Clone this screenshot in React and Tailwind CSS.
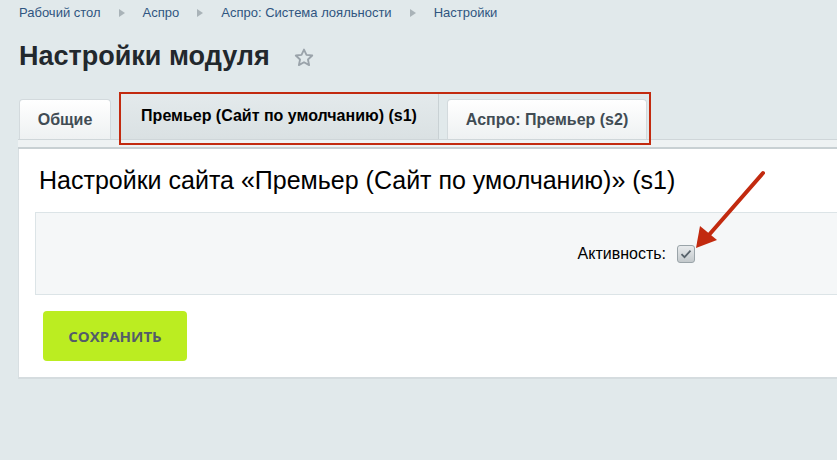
import React from 'react';

const crumbs = ['Рабочий стол', 'Аспро', 'Аспро: Система лояльности', 'Настройки'];

const Sep = () => (
  <svg width="6" height="8" viewBox="0 0 6 8" className='mx-[18px]'>
    <path d="M0 0 L6 4 L0 8 Z" fill="#a9b3b8" />
  </svg>
);

const App = () => {
  return (
    <div className='relative w-[837px] h-[460px] overflow-hidden bg-[#e1e9eb] font-["Liberation_Sans",Arial,sans-serif]'>
      {/* breadcrumbs */}
      <div className='h-[26px] flex items-center pl-[19px] text-[13px] text-[#2f5580]'>
        {crumbs.map((c, i) => (
          <React.Fragment key={c}>
            {i > 0 && <Sep />}
            <span>{c}</span>
          </React.Fragment>
        ))}
      </div>

      {/* page title */}
      <div className='mt-[12px] h-[36px] flex items-center pl-[19px]'>
        <h1 className='text-[27px] leading-[36px] font-bold text-[#22282d]'>Настройки модуля</h1>
        <svg width="22" height="22" viewBox="0 0 24 24" className='ml-[23px] mt-[3px]'>
          <path d="M12 2.8l2.7 5.8 6.3.7-4.7 4.3 1.3 6.2L12 16.6l-5.6 3.2 1.3-6.2L3 9.3l6.3-.7z" fill="none" stroke="#9aa3aa" strokeWidth="2" strokeLinejoin="round" />
        </svg>
      </div>

      {/* tabs */}
      <div className='mt-[18px] pl-[19px] flex items-end h-[47px] gap-[8px]'>
        <div className='w-[92px] h-[40px] rounded-t-[4px] border border-b-0 border-[#d3dadd] bg-gradient-to-b from-white to-[#eef1f2] flex items-center justify-center text-[16px] font-bold text-[#414c54]'>
          Общие
        </div>
        <div className='w-[320px] h-[47px] rounded-t-[3px] border border-b-0 border-[#c9d1d4] bg-gradient-to-b from-[#e4eaec] to-[#dae1e3] flex items-center justify-center text-[16px] font-bold text-black'>
          Премьер (Сайт по умолчанию) (s1)
        </div>
        <div className='w-[200px] h-[40px] rounded-t-[4px] border border-b-0 border-[#d3dadd] bg-gradient-to-b from-white to-[#eef1f2] flex items-center justify-center text-[16px] font-bold text-[#414c54]'>
          Аспро: Премьер (s2)
        </div>
      </div>

      {/* tab strip under the tabs */}
      <div className='ml-[18px] h-[10px] border-t border-[#cfd6d9] bg-[#eef2f3] border-b-2 border-b-[#c8d0d3]'></div>

      {/* settings panel */}
      <div className='ml-[18px] w-[900px] bg-white border-l border-[#d8dfe2] border-b-2 border-b-[#d5dcdf]'>
        <div className='h-[63px] flex items-center pl-[20px] text-[25px] text-black'>
          Настройки сайта «Премьер (Сайт по умолчанию)» (s1)
        </div>
        <div className='ml-[16px] h-[83px] bg-[#f5f7f8] border border-[#dce4e7] flex items-center'>
          <span className='w-[630px] text-right text-[16px] text-black'>Активность:</span>
          <span className='ml-[11px] mt-[1px] w-[18px] h-[18px] rounded-[3px] border border-[#9aa4a9] bg-gradient-to-b from-[#e8ebed] to-[#c3c9cc] flex items-center justify-center'>
            <svg width="12" height="10" viewBox="0 0 12 10">
              <path d="M1.5 5.2l3 3 6-6.5" fill="none" stroke="#58636b" strokeWidth="1.8" />
            </svg>
          </span>
        </div>
        <div className='pt-[16px] pb-[16px] pl-[24px]'>
          <button className='w-[144px] h-[50px] rounded-[4px] bg-[#bbed21] text-[15px] font-bold text-[#535c69] font-["Open_Sans",sans-serif]'>
            СОХРАНИТЬ
          </button>
        </div>
      </div>

      {/* annotation frame around site tabs */}
      <div className='absolute left-[119px] top-[92px] w-[532px] h-[53px] border-2 border-[#c22a0f]'></div>

      {/* annotation arrow pointing at the checkbox */}
      <svg className='absolute left-0 top-0' width="837" height="460">
        <line x1="763" y1="173" x2="708" y2="236" stroke="#c22a0f" strokeWidth="4" strokeLinecap="round" />
        <path d="M696 248 L700 226 L717 240 Z" fill="#c22a0f" />
      </svg>
    </div>
  );
};

export default App;
